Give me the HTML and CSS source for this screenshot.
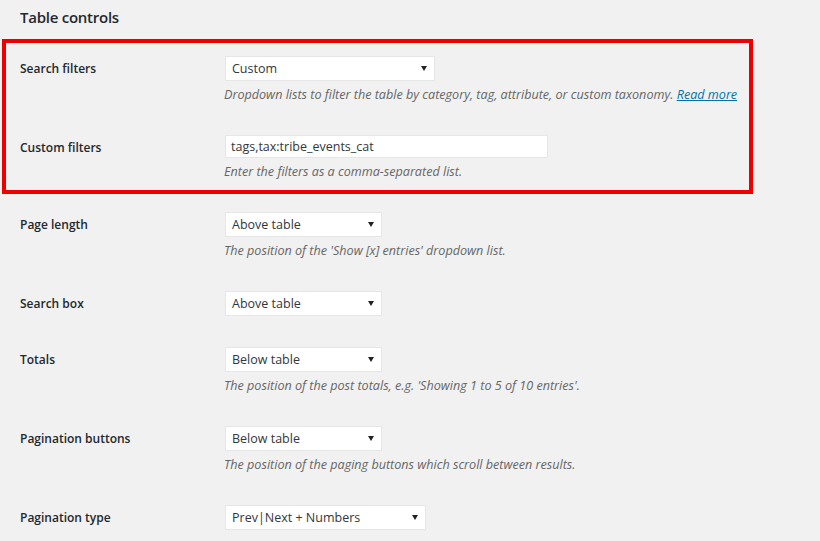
FILE: index.html
```html
<!DOCTYPE html>
<html>
<head>
<meta charset="utf-8">
<link rel="stylesheet" href="styles.css">
</head>
<body>
<div class="page">
  <h2 class="title">Table controls</h2>
  <div class="highlight">
    <div class="row first">
      <div class="label">Search filters</div>
      <div class="field">
        <div class="select w210"><span>Custom</span><svg class="arrow" width="6" height="5" viewBox="0 0 6 5"><path d="M0 0H6L3 5Z" fill="#222"/></svg></div>
        <p class="desc">Dropdown lists to filter the table by category, tag, attribute, or custom taxonomy. <a href="#">Read more</a></p>
      </div>
    </div>
    <div class="row last">
      <div class="label">Custom filters</div>
      <div class="field">
        <div class="textbox"><span>tags,tax:tribe_events_cat</span></div>
        <p class="desc">Enter the filters as a comma-separated list.</p>
      </div>
    </div>
  </div>
  <div class="row">
    <div class="label">Page length</div>
    <div class="field">
      <div class="select w157"><span>Above table</span><svg class="arrow" width="6" height="5" viewBox="0 0 6 5"><path d="M0 0H6L3 5Z" fill="#222"/></svg></div>
      <p class="desc">The position of the 'Show [x] entries' dropdown list.</p>
    </div>
  </div>
  <div class="row">
    <div class="label">Search box</div>
    <div class="field">
      <div class="select w157"><span>Above table</span><svg class="arrow" width="6" height="5" viewBox="0 0 6 5"><path d="M0 0H6L3 5Z" fill="#222"/></svg></div>
    </div>
  </div>
  <div class="row">
    <div class="label">Totals</div>
    <div class="field">
      <div class="select w157"><span>Below table</span><svg class="arrow" width="6" height="5" viewBox="0 0 6 5"><path d="M0 0H6L3 5Z" fill="#222"/></svg></div>
      <p class="desc">The position of the post totals, e.g. 'Showing 1 to 5 of 10 entries'.</p>
    </div>
  </div>
  <div class="row">
    <div class="label">Pagination buttons</div>
    <div class="field">
      <div class="select w157"><span>Below table</span><svg class="arrow" width="6" height="5" viewBox="0 0 6 5"><path d="M0 0H6L3 5Z" fill="#222"/></svg></div>
      <p class="desc">The position of the paging buttons which scroll between results.</p>
    </div>
  </div>
  <div class="row">
    <div class="label">Pagination type</div>
    <div class="field">
      <div class="select w201"><span>Prev|Next + Numbers</span><svg class="arrow" width="6" height="5" viewBox="0 0 6 5"><path d="M0 0H6L3 5Z" fill="#222"/></svg></div>
    </div>
  </div>
</div>
</body>
</html>
```

FILE: styles.css
```css
html, body {
  margin: 0;
  padding: 0;
  background: #f1f1f1;
  height: 100%;
  overflow: hidden;
}
body {
  font-family: "Open Sans", "Noto Sans", sans-serif;
  color: #23282d;
}
.page {
  padding-left: 20px;
}
.title {
  margin: 0;
  padding-top: 6px;
  font-size: 15px;
  line-height: 22px;
  font-weight: 600;
  letter-spacing: -0.25px;
  color: #23282d;
}
.highlight {
  margin: 11px 0 3px -18px;
  width: 729px;
  border: 4px solid #ee0000;
  padding-left: 14px;
}
.row {
  display: flex;
  padding: 15px 0 16px;
}
.row.first {
  padding-top: 13px;
}
.row.last {
  padding-bottom: 9px;
}
.label {
  width: 205px;
  flex: none;
  height: 25px;
  display: flex;
  align-items: center;
  font-size: 12px;
  font-weight: 600;
  color: #23282d;
}
.field {
  flex: 1;
}
.select {
  height: 25px;
  box-sizing: border-box;
  background: #fff;
  border: 1px solid #e6e6e6;
  display: flex;
  align-items: center;
  justify-content: space-between;
  padding: 0 7px 0 6px;
  font-size: 12.5px;
  color: #32373c;
}
.w210 { width: 210px; }
.w157 { width: 157px; }
.w201 { width: 201px; }
.arrow {
  flex: none;
}
.textbox {
  height: 23px;
  width: 323px;
  box-sizing: border-box;
  background: #fff;
  border: 1px solid #e6e6e6;
  display: flex;
  align-items: center;
  padding: 0 5px;
  font-size: 12.5px;
  color: #32373c;
}
.desc {
  margin: 5px 0 0 -1px;
  line-height: 18px;
  font-size: 12.6px;
  font-style: italic;
  color: #666;
}
.desc a {
  color: #0073aa;
  text-decoration: underline;
}
```
